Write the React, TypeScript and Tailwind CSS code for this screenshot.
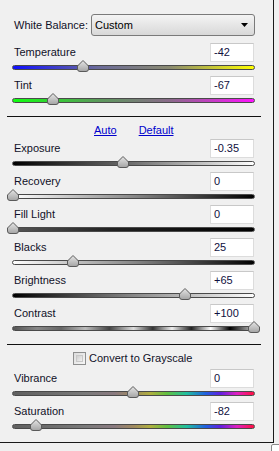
import React from 'react';

type Slider = {
  label: string;
  value: string;
  pos: number; // thumb centre, px from track start
  track: string;
};

const font = { fontFamily: '"Liberation Sans", Arial, sans-serif' };

const Thumb = ({ pos }: { pos: number }) => (
  <svg
    width="14"
    height="14"
    viewBox="0 0 14 14"
    className="absolute top-[-3px]"
    style={{ left: pos - 7 }}
  >
    <defs>
      <linearGradient id="thumbFill" x1="0" y1="0" x2="0" y2="1">
        <stop offset="0" stopColor="#e6e6e6" />
        <stop offset="1" stopColor="#a4a4a4" />
      </linearGradient>
    </defs>
    <path
      d="M7 1.5 L12.5 7 L12.5 10 Q12.5 12.5 10 12.5 L4 12.5 Q1.5 12.5 1.5 10 L1.5 7 Z"
      fill="url(#thumbFill)"
      stroke="#5a5a5a"
      strokeWidth="1"
    />
  </svg>
);

const SliderRow = ({ s }: { s: Slider }) => (
  <div className="flex flex-col">
    <div className="flex items-center justify-between h-[19px] pl-[14px] pr-[19px]">
      <span className="text-[11px] text-[#101028]">{s.label}</span>
      <div className="w-[44px] h-[19px] bg-white border border-[#dcdcdc] border-t-[#c8c8c8] flex items-center pl-[3px] text-[11px] text-[#101040]">
        {s.value}
      </div>
    </div>
    <div className="relative h-[14px] ml-[12px] w-[243px]">
      <div
        className={`absolute left-0 right-0 top-[3px] h-[5px] rounded-full border border-[#4a4a4a] ${s.track}`}
      />
      <Thumb pos={s.pos} />
    </div>
  </div>
);

const whiteBalance: Slider[] = [
  { label: 'Temperature', value: '-42', pos: 71, track: 'bg-[linear-gradient(to_right,#1010ff,#6a6a9a_35%,#8a8a70_65%,#ffff00)]' },
  { label: 'Tint', value: '-67', pos: 41, track: 'bg-[linear-gradient(to_right,#10ff10,#5a9a5a_35%,#8a6a8a_65%,#ff10ff)]' },
];

const tone: Slider[] = [
  { label: 'Exposure', value: '-0.35', pos: 111, track: 'bg-[linear-gradient(to_right,#000,#707070_50%,#fff)]' },
  { label: 'Recovery', value: '0', pos: 1, track: 'bg-[linear-gradient(to_right,#fff,#888_50%,#000)]' },
  { label: 'Fill Light', value: '0', pos: 1, track: 'bg-[linear-gradient(to_right,#555,#222_40%,#000)]' },
  { label: 'Blacks', value: '25', pos: 61, track: 'bg-[linear-gradient(to_right,#fff,#888_50%,#000)]' },
  { label: 'Brightness', value: '+65', pos: 173, track: 'bg-[linear-gradient(to_right,#000,#888_50%,#fff)]' },
  {
    label: 'Contrast',
    value: '+100',
    pos: 242,
    track:
      'bg-[linear-gradient(to_right,#555,#888_10%,#666_20%,#bbb_30%,#444_40%,#ddd_50%,#333_58%,#eee_66%,#222_74%,#fff_82%,#000_90%,#ccc)]',
  },
];

const presence: Slider[] = [
  {
    label: 'Vibrance',
    value: '0',
    pos: 121,
    track:
      'bg-[linear-gradient(to_right,#606060,#7a7a7a_30%,#8a7a80_42%,#a08a60_50%,#b0b040_57%,#60c040_64%,#20c0a0_72%,#2060e0_80%,#6020e0_86%,#e020c0_93%,#ff1040)]',
  },
  {
    label: 'Saturation',
    value: '-82',
    pos: 24,
    track:
      'bg-[linear-gradient(to_right,#606060,#7a7a7a_30%,#8a7a80_42%,#a08a60_50%,#b0b040_57%,#60c040_64%,#20c0a0_72%,#2060e0_80%,#6020e0_86%,#e020c0_93%,#ff1040)]',
  },
];

export default function App() {
  return (
    <div className="w-[279px] h-[451px] bg-[#f0f0f0] overflow-hidden relative" style={font}>
      <div className="w-[274px] h-[443px] border-r border-b border-[#1a1a1a] flex flex-col pt-[14px]">
        {/* White balance */}
        <div className="flex items-center h-[22px] pl-[14px]">
          <span className="text-[11px] text-[#101028] w-[77px]">White Balance:</span>
          <div className="w-[164px] h-[22px] rounded-[3px] border border-[#7a7a7a] bg-[linear-gradient(to_bottom,#f4f4f4,#e6e6e6_50%,#d8d8d8)] flex items-center justify-between pl-[3px] pr-[6px]">
            <span className="text-[11px] text-black">Custom</span>
            <svg width="7" height="4" viewBox="0 0 7 4">
              <path d="M0 0 L7 0 L3.5 4 Z" fill="#000" />
            </svg>
          </div>
        </div>
        <div className="flex flex-col mt-[7px]">
          {whiteBalance.map((s) => (
            <SliderRow key={s.label} s={s} />
          ))}
        </div>

        <div className="mt-[7px] ml-[7px] w-[254px] h-px bg-[#111]" />

        {/* Tone */}
        <div className="flex h-[22px] items-end pb-[1px] pl-[94px] gap-[22px]">
          <span className="text-[11px] text-[#0000cc] underline">Auto</span>
          <span className="text-[11px] text-[#0000cc] underline">Default</span>
        </div>
        <div className="flex flex-col">
          {tone.map((s) => (
            <SliderRow key={s.label} s={s} />
          ))}
        </div>

        <div className="mt-[7px] ml-[7px] w-[254px] h-px bg-[#111]" />

        {/* Presence */}
        <div className="flex items-center h-[24px] pt-[3px] pl-[73px]">
          <div className="w-[13px] h-[13px] border border-[#8e8f8f] bg-[linear-gradient(135deg,#dcdcdc,#f6f6f6)] p-[2px]">
            <div className="w-full h-full border border-[#c8c8c8] bg-[linear-gradient(135deg,#cfcfcf,#f0f0f0)]" />
          </div>
          <span className="ml-[3px] text-[11px] text-[#101028]">Convert to Grayscale</span>
        </div>
        <div className="flex flex-col">
          {presence.map((s) => (
            <SliderRow key={s.label} s={s} />
          ))}
        </div>
      </div>
      <div className="absolute left-[271px] top-[444px] w-[12px] h-[12px] rounded-[2px] border border-[#8a8a8a] bg-white" />
    </div>
  );
}
